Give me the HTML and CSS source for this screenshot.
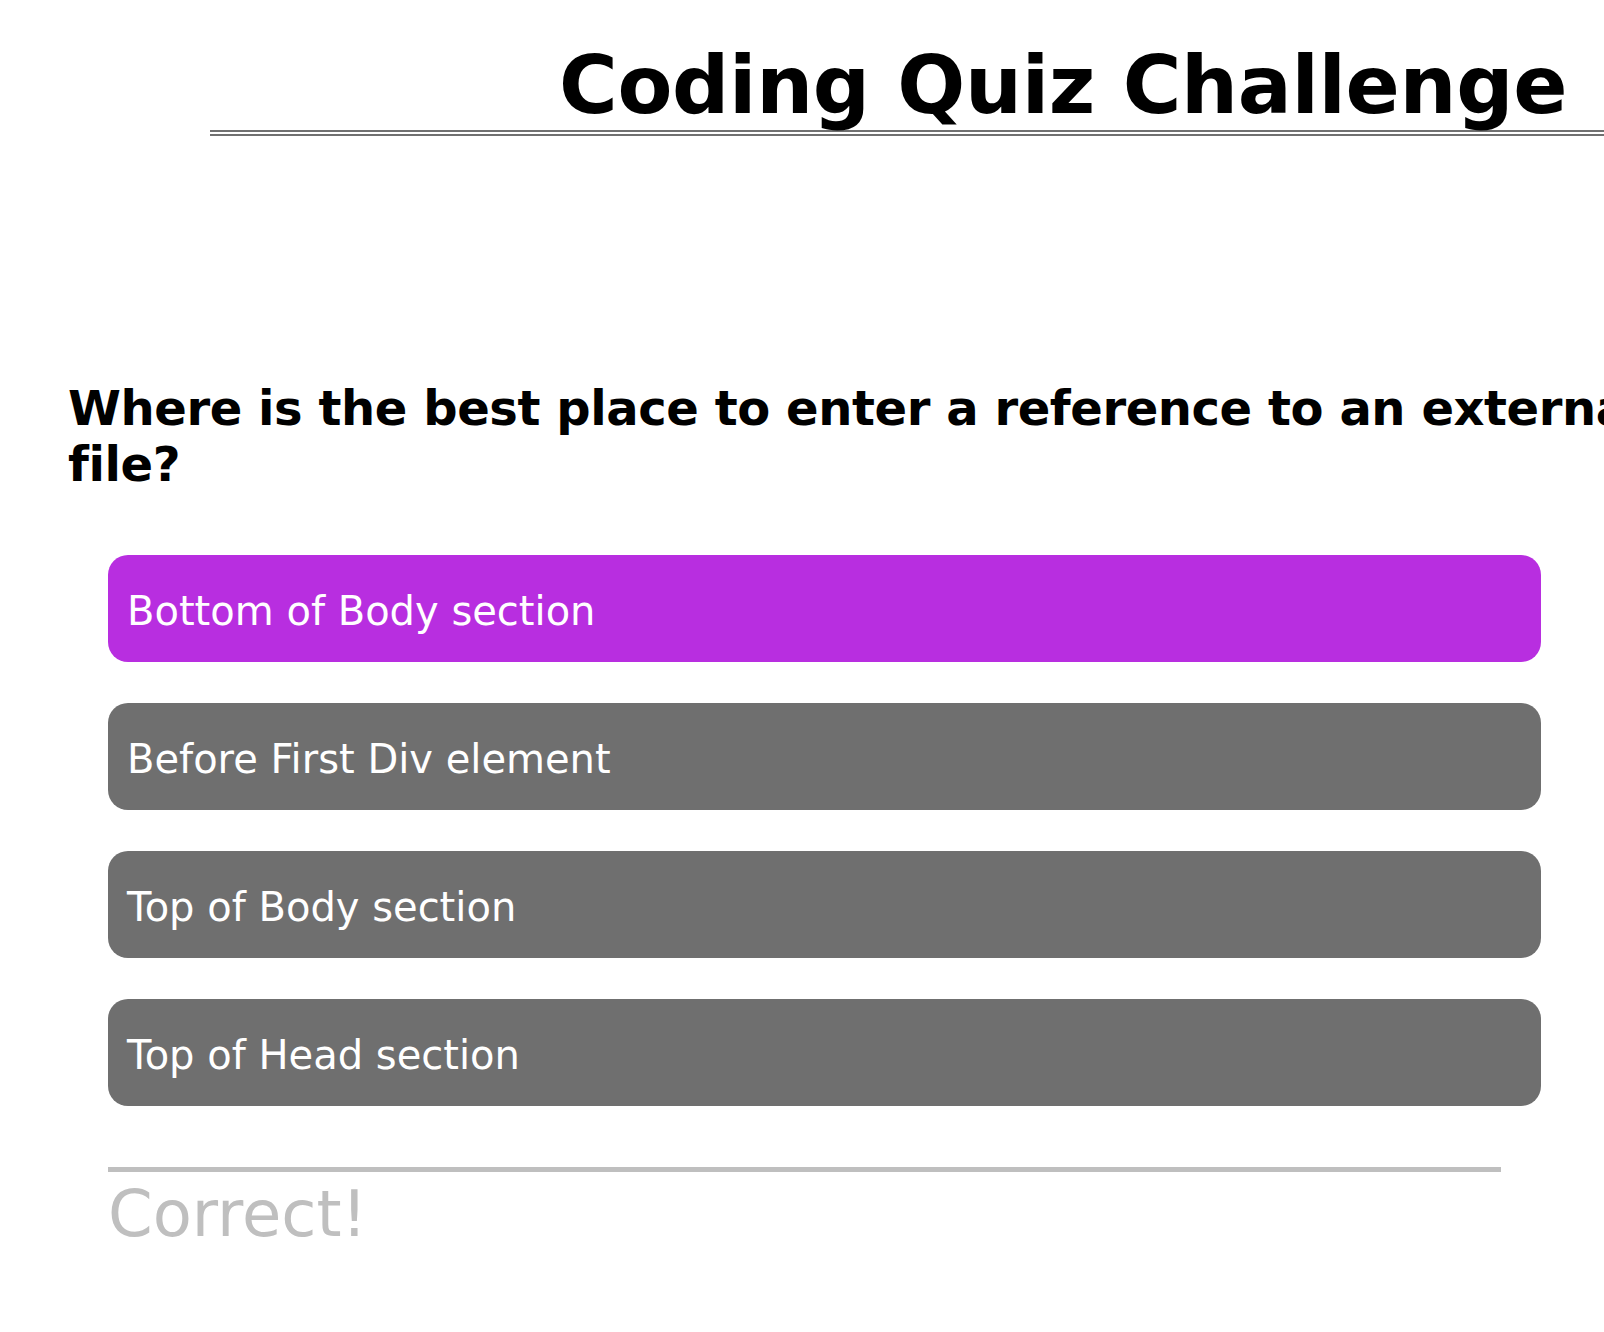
FILE: index.html
```html
<!DOCTYPE html>
<html lang="en">
<head>
<meta charset="utf-8">
<title>Coding Quiz Challenge</title>
<link rel="stylesheet" href="styles.css">
</head>
<body>
<header class="top">
  <h1 class="title">Coding Quiz Challenge</h1>
</header>
<main class="quiz">
  <h2 class="question">Where is the best place to enter a reference to an external JavaScript file?</h2>
  <div class="choices">
    <button class="choice choice-active">Bottom of Body section</button>
    <button class="choice">Before First Div element</button>
    <button class="choice">Top of Body section</button>
    <button class="choice">Top of Head section</button>
  </div>
  <div class="feedback">Correct!</div>
</main>
</body>
</html>
```
FILE: styles.css
```css
html {
  overflow-x: hidden;
}
body {
  margin: 0;
  background: #ffffff;
  color: #000000;
  font-family: "DejaVu Sans", Verdana, sans-serif;
}
.top {
  display: block;
}
.title {
  margin: 41px 0 0 210px;
  padding-left: 349px;
  font-size: 80px;
  line-height: 89px;
  font-weight: bold;
  letter-spacing: -0.3px;
  white-space: nowrap;
  border-bottom: 6px double #707070;
}
.quiz {
  display: block;
}
.question {
  margin: 244px 0 0 68px;
  width: 1905px;
  font-size: 48px;
  font-weight: bold;
  letter-spacing: -0.42px;
  line-height: normal;
}
.choices {
  display: flex;
  flex-direction: column;
  gap: 41px;
  margin: 63px 0 0 108px;
  width: 1433px;
}
.choice {
  display: block;
  width: 100%;
  margin: 0;
  border: none;
  border-radius: 20px;
  padding: 33px 19px 27px;
  background: #6f6f6f;
  color: #ffffff;
  font-family: "DejaVu Sans", Verdana, sans-serif;
  font-size: 40px;
  line-height: 47px;
  text-align: left;
}
.choice-active {
  background: #b82ee0;
}
.feedback {
  margin: 61px 0 0 108px;
  width: 1393px;
  border-top: 5px solid #bfbfbf;
  padding-top: 5px;
  color: #bfbfbf;
  font-size: 64px;
  line-height: normal;
}
```
